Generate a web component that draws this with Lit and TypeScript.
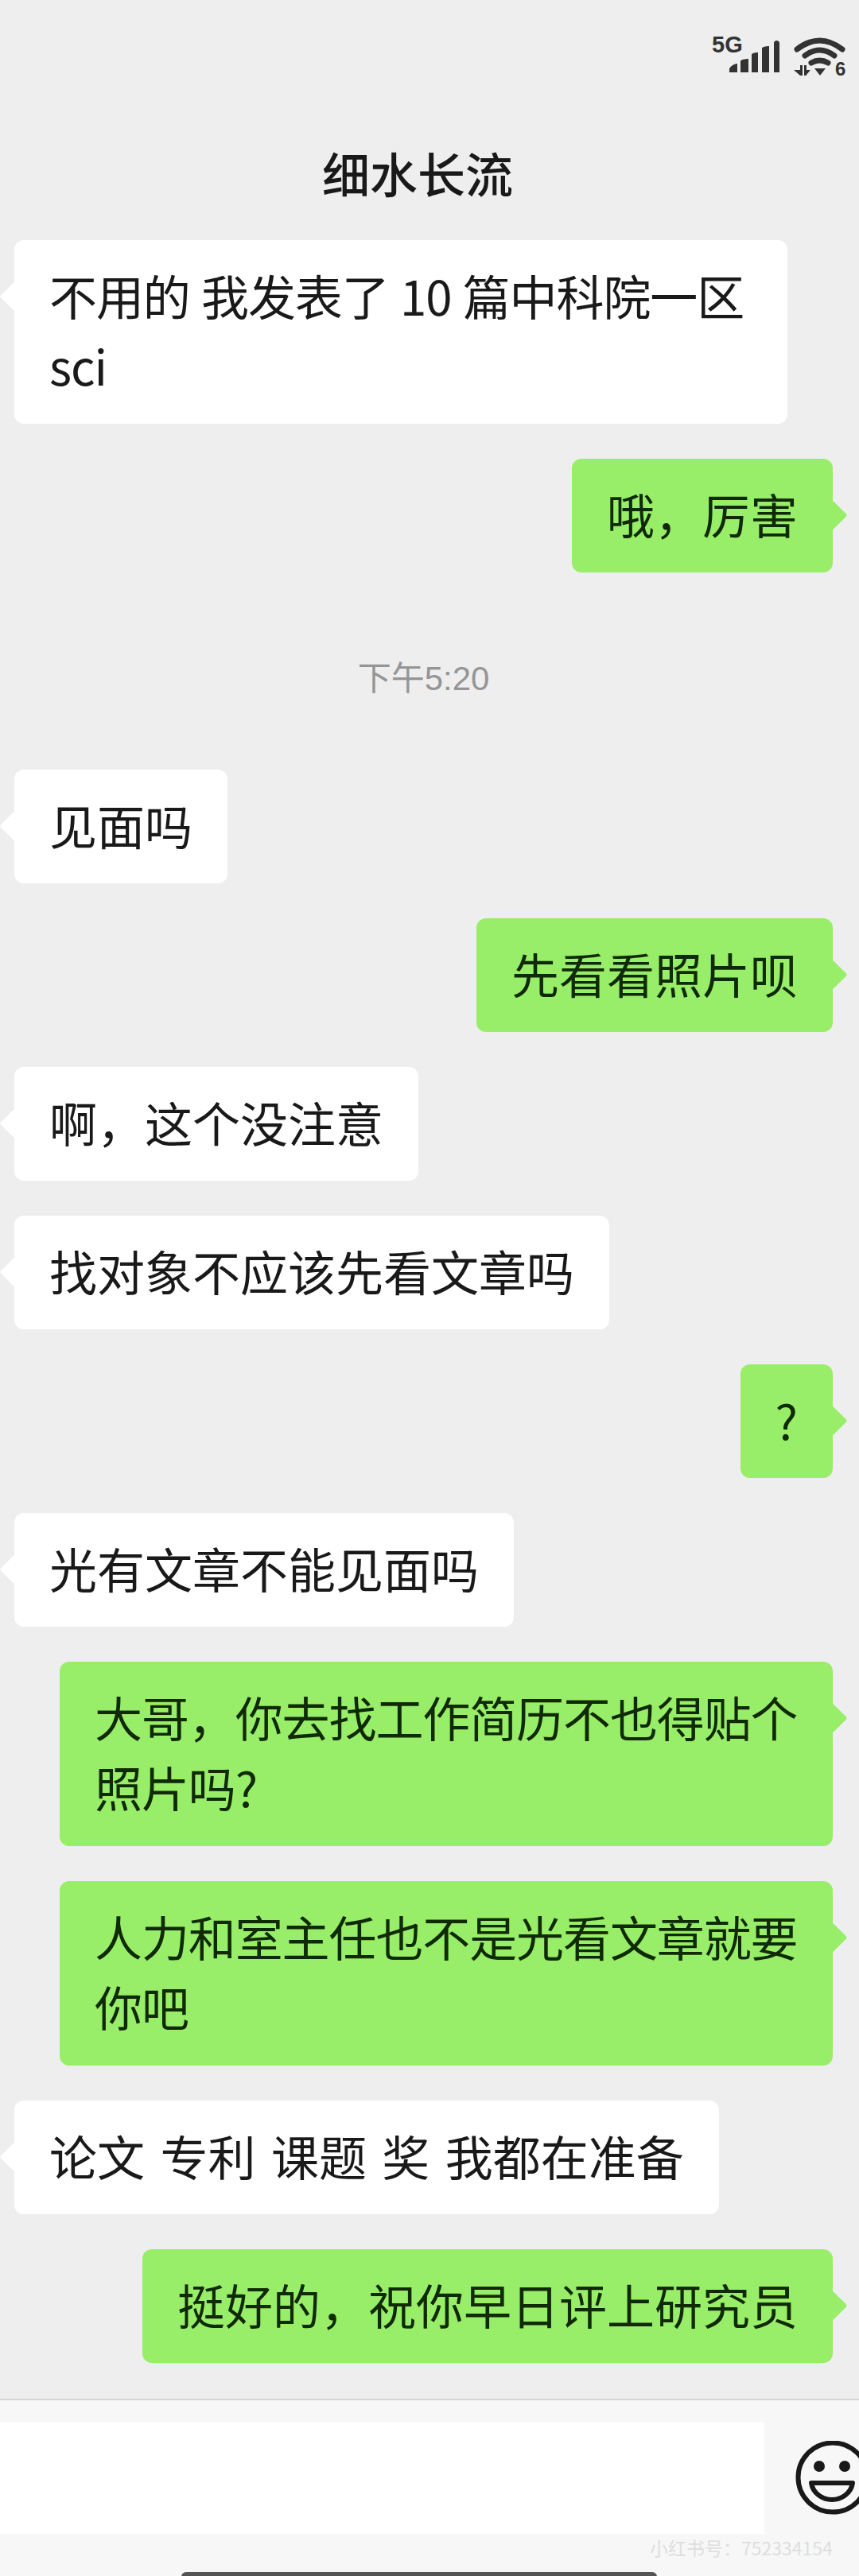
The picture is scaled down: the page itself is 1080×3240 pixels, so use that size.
import { LitElement, html, css, svg } from "lit";
import { customElement } from "lit/decorators.js";

type Msg =
  | { t: "time"; text: string }
  | { t: "in" | "out"; lines: string[] };

const MESSAGES: Msg[] = [
  { t: "in", lines: ["不用的 我发表了 10 篇中科院一区", "sci"] },
  { t: "out", lines: ["哦，厉害"] },
  { t: "time", text: "下午5:20" },
  { t: "in", lines: ["见面吗"] },
  { t: "out", lines: ["先看看照片呗"] },
  { t: "in", lines: ["啊，这个没注意"] },
  { t: "in", lines: ["找对象不应该先看文章吗"] },
  { t: "out", lines: ["?"] },
  { t: "in", lines: ["光有文章不能见面吗"] },
  { t: "out", lines: ["大哥，你去找工作简历不也得贴个", "照片吗?"] },
  { t: "out", lines: ["人力和室主任也不是光看文章就要", "你吧"] },
  { t: "in", lines: ["论文 专利 课题 奖 我都在准备"] },
  { t: "out", lines: ["挺好的，祝你早日评上研究员"] },
];

@customElement("app-root")
export class AppRoot extends LitElement {
  static styles = css`
    :host {
      display: block;
      width: 1080px;
      height: 3240px;
      background: #eeeeee;
      font-family: "Noto Sans CJK SC", "Noto Sans", sans-serif;
      color: #191919;
      overflow: hidden;
    }
    .page { display: flex; flex-direction: column; height: 3240px; }
    .status {
      height: 100px;
      flex: none;
      display: flex;
      justify-content: flex-end;
      align-items: flex-start;
      padding: 44px 12px 0 0;
      box-sizing: border-box;
      gap: 15px;
    }
    .signal { position: relative; width: 86px; height: 48px; }
    .five-g {
      position: absolute;
      left: 0;
      top: -1px;
      font: 700 29px/26px "Liberation Sans", sans-serif;
      color: #333;
    }
    .bars { position: absolute; left: 22px; top: 6px; }
    .wifi { margin-top: 1px; }
    .nav {
      height: 202px;
      flex: none;
      display: flex;
      justify-content: center;
      align-items: flex-start;
      font-size: 60px;
      font-weight: 500;
      line-height: 84px;
      padding: 75px 30px 0 0;
      box-sizing: border-box;
    }
    .list { display: flex; flex-direction: column; gap: 44px; flex: 1; padding: 0 33px 0 18px; }
    .row { display: flex; }
    .row.out { justify-content: flex-end; }
    .bubble {
      position: relative;
      box-sizing: border-box;
      padding: 25px 44px 30px;
      font-size: 60px;
      line-height: 88px;
      word-spacing: 6px;
      white-space: nowrap;
      border-radius: 12px;
      background: #fff;
    }
    .bubble.wrapped { width: 972px; letter-spacing: -1.1px; word-spacing: 2px; }
    .out .bubble.wrapped { padding-bottom: 31px; }
    .line { display: block; }
    .out .bubble { background: #98ee69; color: #102a05; }
    .bubble::after {
      content: "";
      position: absolute;
      top: 58px;
      width: 26px;
      height: 26px;
      transform: rotate(45deg);
      background: inherit;
      border-radius: 2px;
    }
    .in .bubble::after { left: -13px; }
    .out .bubble::after { right: -13px; }
    .time {
      text-align: center;
      color: #959595;
      font-size: 42px;
      line-height: 60px;
      padding: 60px 0 40px;
      font-family: "Liberation Sans", "Noto Sans CJK SC", sans-serif;
    }
    .footer {
      flex: none;
      height: 223px;
      box-sizing: border-box;
      border-top: 2px solid #d6d6d6;
      background: #f7f7f7;
      position: relative;
      padding-top: 27px;
    }
    .input { width: 961px; height: 141px; background: #fff; }
    .smile { position: absolute; left: 1000px; top: 51px; }
    .mark {
      position: absolute;
      left: 817px;
      top: 170px;
      font-size: 23px;
      line-height: 30px;
      color: #dedede;
      white-space: nowrap;
    }
    .home {
      position: absolute;
      left: 228px;
      top: 216px;
      width: 598px;
      height: 12px;
      background: #555;
      border-radius: 6px;
    }
  `;

  render() {
    return html`
      <div class="page">
        <div class="status">
          <div class="signal">
            <span class="five-g">5G</span>
            <svg class="bars" width="64" height="42" viewBox="0 0 64 42">
              <path fill="#333" d="M0 41v-4c0-3 6-7 10-7v11zM14 41V27c0-2 6-3 10-3v17zM28 41V19c0-2 4-3 8-3v25zM41 41V11c0-2 5-3 9-3v33zM56 41V4c0-2 2-3 3.5-3s3.5 1 3.5 3v37z" />
            </svg>
          </div>
          <svg class="wifi" width="72" height="58" viewBox="0 0 72 58">
            ${svg`
              <g fill="none" stroke="#333" stroke-width="7" stroke-linecap="round">
                <path d="M6 17 Q34.5 -5 63 17" />
                <path d="M16 25 Q34.5 11 53 25" />
                <path d="M24 34 Q34.5 28 45 34" />
              </g>
              <path fill="#333" d="M28 41h14l-7 9zM2 43h8v-6h3v13h-3zM15 37h3v6h5l-5 6v1h-3z" />
              <text x="54" y="50" font-family="Liberation Sans, sans-serif" font-weight="700" font-size="24" fill="#333">6</text>
            `}
          </svg>
        </div>
        <div class="nav">细水长流</div>
        <div class="list">
          ${MESSAGES.map((m) =>
            m.t === "time"
              ? html`<div class="time">${m.text}</div>`
              : html`<div class="row ${m.t}">
                  <div class="bubble ${m.lines.length > 1 ? "wrapped" : ""}">
                    ${m.lines.map((l) => html`<span class="line">${l}</span>`)}
                  </div>
                </div>`
          )}
        </div>
        <div class="footer">
          <div class="input"></div>
          <svg class="smile" width="96" height="96" viewBox="0 0 96 96">
            <circle cx="47" cy="46" r="43.5" fill="none" stroke="#191919" stroke-width="6" />
            <circle cx="30" cy="32" r="7" fill="#191919" />
            <circle cx="62" cy="32" r="7" fill="#191919" />
            <path d="M20 53H72C70 66 58 74 46 74C34 74 22 66 20 53Z" fill="none" stroke="#191919" stroke-width="6" stroke-linejoin="round" />
          </svg>
          <div class="mark">小红书号：752334154</div>
          <div class="home"></div>
        </div>
      </div>
    `;
  }
}
